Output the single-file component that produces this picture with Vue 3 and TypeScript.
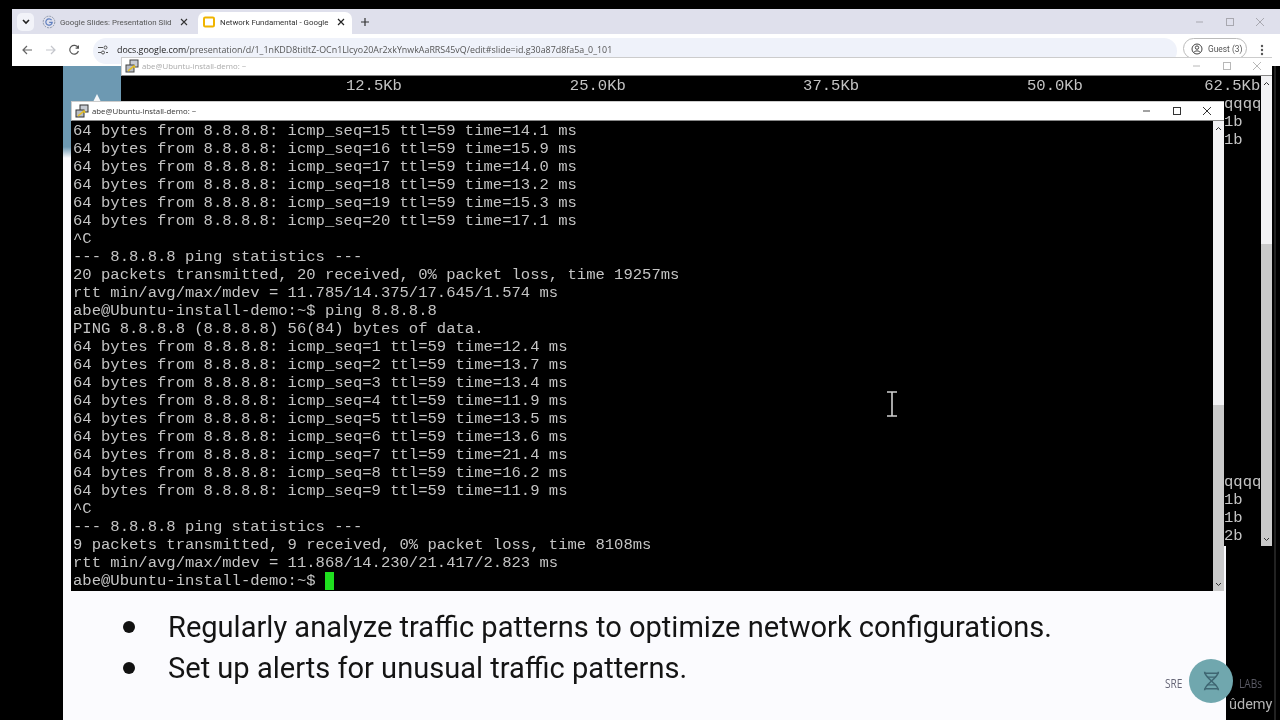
<script setup lang="ts">
const backHeader: string =
  ' '.repeat(24) + '12.5Kb' + ' '.repeat(18) + '25.0Kb' + ' '.repeat(19) + '37.5Kb' + ' '.repeat(18) + '50.0Kb' + ' '.repeat(13) + '62.5Kb'

const backSide: string[] = [
  'qqqq',
  '1b',
  '1b',
  ...Array.from({ length: 18 }, () => ''),
  'qqqq',
  '1b',
  '1b',
  '2b',
]

const frontRows: string[] = [
  '64 bytes from 8.8.8.8: icmp_seq=15 ttl=59 time=14.1 ms',
  '64 bytes from 8.8.8.8: icmp_seq=16 ttl=59 time=15.9 ms',
  '64 bytes from 8.8.8.8: icmp_seq=17 ttl=59 time=14.0 ms',
  '64 bytes from 8.8.8.8: icmp_seq=18 ttl=59 time=13.2 ms',
  '64 bytes from 8.8.8.8: icmp_seq=19 ttl=59 time=15.3 ms',
  '64 bytes from 8.8.8.8: icmp_seq=20 ttl=59 time=17.1 ms',
  '^C',
  '--- 8.8.8.8 ping statistics ---',
  '20 packets transmitted, 20 received, 0% packet loss, time 19257ms',
  'rtt min/avg/max/mdev = 11.785/14.375/17.645/1.574 ms',
  'abe@Ubuntu-install-demo:~$ ping 8.8.8.8',
  'PING 8.8.8.8 (8.8.8.8) 56(84) bytes of data.',
  '64 bytes from 8.8.8.8: icmp_seq=1 ttl=59 time=12.4 ms',
  '64 bytes from 8.8.8.8: icmp_seq=2 ttl=59 time=13.7 ms',
  '64 bytes from 8.8.8.8: icmp_seq=3 ttl=59 time=13.4 ms',
  '64 bytes from 8.8.8.8: icmp_seq=4 ttl=59 time=11.9 ms',
  '64 bytes from 8.8.8.8: icmp_seq=5 ttl=59 time=13.5 ms',
  '64 bytes from 8.8.8.8: icmp_seq=6 ttl=59 time=13.6 ms',
  '64 bytes from 8.8.8.8: icmp_seq=7 ttl=59 time=21.4 ms',
  '64 bytes from 8.8.8.8: icmp_seq=8 ttl=59 time=16.2 ms',
  '64 bytes from 8.8.8.8: icmp_seq=9 ttl=59 time=11.9 ms',
  '^C',
  '--- 8.8.8.8 ping statistics ---',
  '9 packets transmitted, 9 received, 0% packet loss, time 8108ms',
  'rtt min/avg/max/mdev = 11.868/14.230/21.417/2.823 ms',
]
</script>

<template>
  <div class="screen">
    <div class="browser">
      <div class="tabstrip">
        <div class="tab-menu">
          <svg width="8" height="6" viewBox="0 0 8 6"><path d="M1 1l3 3 3-3" fill="none" stroke="#222" stroke-width="1.6" /></svg>
        </div>
        <div class="tab tab-idle">
          <svg class="fav" width="14" height="14" viewBox="0 0 14 14">
            <circle cx="7" cy="7" r="5.8" fill="none" stroke="#8c96a8" stroke-width="1" stroke-dasharray="2 1" />
            <path d="M9.6 5.1A3.2 3.2 0 1 0 10.2 7.4H7.2" fill="none" stroke="#5f7fc0" stroke-width="1.2" />
          </svg>
          <span class="tab-label">Google Slides: Presentation Slid</span>
          <svg class="tab-x" width="8" height="8" viewBox="0 0 8 8"><path d="M1 1l6 6M7 1L1 7" stroke="#333" stroke-width="1.1" /></svg>
        </div>
        <div class="tab tab-active">
          <svg class="fav" width="12" height="12" viewBox="0 0 12 12">
            <rect x="1" y="1.5" width="10" height="9" rx="1.2" fill="#fff" stroke="#f0b400" stroke-width="2" />
          </svg>
          <span class="tab-label">Network Fundamental - Google</span>
          <svg class="tab-x" width="8" height="8" viewBox="0 0 8 8"><path d="M1 1l6 6M7 1L1 7" stroke="#222" stroke-width="1.2" /></svg>
        </div>
        <svg class="new-tab" width="10" height="10" viewBox="0 0 10 10"><path d="M5 1v8M1 5h8" stroke="#333" stroke-width="1.2" /></svg>
        <div class="win-controls chrome-controls">
          <svg width="10" height="10" viewBox="0 0 10 10"><path d="M1 5h7" stroke="#a8a8b0" stroke-width="1" /></svg>
          <svg width="10" height="10" viewBox="0 0 10 10"><rect x="1.5" y="1.5" width="7" height="7" fill="none" stroke="#a8a8b0" /></svg>
          <svg width="10" height="10" viewBox="0 0 10 10"><path d="M1 1l8 8M9 1l-8 8" stroke="#a8a8b0" /></svg>
        </div>
      </div>
      <div class="toolbar">
        <svg class="nav" width="12" height="12" viewBox="0 0 12 12"><path d="M11 6H2M6 2L2 6l4 4" fill="none" stroke="#666" stroke-width="1.2" /></svg>
        <svg class="nav" width="12" height="12" viewBox="0 0 12 12"><path d="M1 6h9M6 2l4 4-4 4" fill="none" stroke="#c4c6cc" stroke-width="1.2" /></svg>
        <svg class="nav" width="12" height="12" viewBox="0 0 12 12"><path d="M10 3.6A4.4 4.4 0 1 0 10.4 7M10.4 1.4v2.8H7.6" fill="none" stroke="#555" stroke-width="1.2" /></svg>
        <div class="omnibox">
          <svg width="12" height="10" viewBox="0 0 12 10">
            <path d="M1 2.5h5M9 7.5h2M1 7.5h3" stroke="#555" stroke-width="1.1" />
            <circle cx="8.5" cy="2.5" r="1.5" fill="none" stroke="#555" />
            <circle cx="6" cy="7.5" r="1.5" fill="none" stroke="#555" />
          </svg>
          <span class="url"><b>docs.google.com</b>/presentation/d/1_1nKDD8titltZ-OCn1Llcyo20Ar2xkYnwkAaRRS45vQ/edit#slide=id.g30a87d8fa5a_0_101</span>
        </div>
        <div class="guest">
          <svg width="12" height="12" viewBox="0 0 12 12">
            <circle cx="6" cy="6" r="5" fill="none" stroke="#444" />
            <circle cx="6" cy="4.6" r="1.7" fill="none" stroke="#444" />
            <path d="M2.8 9.4C4 7.4 8 7.4 9.2 9.4" fill="none" stroke="#444" />
          </svg>
          <span>Guest (3)</span>
        </div>
        <svg class="kebab" width="4" height="12" viewBox="0 0 4 12">
          <circle cx="2" cy="2" r="1.2" fill="#555" /><circle cx="2" cy="6" r="1.2" fill="#555" /><circle cx="2" cy="10" r="1.2" fill="#555" />
        </svg>
      </div>
      <div class="stage">
        <div class="edge-line"></div>
        <div class="slide">
          <div class="slide-bg"><div class="peak"></div></div>
          <div class="slide-text">
            <ul class="points">
              <li>Regularly analyze traffic patterns to optimize network configurations.</li>
              <li>Set up alerts for unusual traffic patterns.</li>
            </ul>
            <div class="logo">
              <span class="logo-word logo-sre">SRE</span>
              <div class="logo-circle">
                <svg width="19" height="20" viewBox="0 0 24 26">
                  <g fill="none" stroke="#3f6672" stroke-width="2">
                    <path d="M3 1C3 9 21 17 21 25" />
                    <path d="M21 1C21 9 3 17 3 25" />
                    <path d="M3 3h18M6 8h12M6 18h12M3 23h18" stroke-width="1.8" />
                  </g>
                </svg>
              </div>
              <span class="logo-word logo-labs">LABs</span>
            </div>
          </div>
        </div>
      </div>
    </div>

    <span class="udemy">ûdemy</span>

    <section class="term term-back">
      <header class="term-title">
        <svg class="putty" width="14" height="14" viewBox="0 0 14 14">
          <rect x="5" y="1" width="8" height="7" fill="#c8ccd4" stroke="#444" />
          <rect x="1" y="6" width="8" height="7" fill="#b8bcc4" stroke="#444" />
          <path d="M3 12l6-5 1 2" fill="none" stroke="#e8c020" stroke-width="1.6" />
        </svg>
        <span>abe@Ubuntu-install-demo: ~</span>
        <div class="win-controls">
          <svg width="10" height="10" viewBox="0 0 10 10"><path d="M1 5h7" stroke="#b8b8b8" /></svg>
          <svg width="10" height="10" viewBox="0 0 10 10"><rect x="1.5" y="1.5" width="7" height="7" fill="none" stroke="#b8b8b8" /></svg>
          <svg width="10" height="10" viewBox="0 0 10 10"><path d="M1 1l8 8M9 1l-8 8" stroke="#b8b8b8" /></svg>
        </div>
      </header>
      <div class="term-body">
        <div class="term-text">
          <div class="row">{{ backHeader }}</div>
          <div v-for="(row, i) in backSide" :key="i" class="row row-side">{{ row }}</div>
        </div>
        <div class="scroll">
          <span class="thumb thumb-back"></span>
          <svg class="arrow up" width="7" height="5" viewBox="0 0 7 5"><path d="M1 4l2.5-2.5L6 4" fill="none" stroke="#333" /></svg>
          <svg class="arrow down" width="7" height="5" viewBox="0 0 7 5"><path d="M1 1l2.5 2.5L6 1" fill="none" stroke="#333" /></svg>
        </div>
      </div>
    </section>

    <section class="term term-front">
      <header class="term-title">
        <svg class="putty" width="14" height="14" viewBox="0 0 14 14">
          <rect x="5" y="1" width="8" height="7" fill="#c8ccd4" stroke="#333" />
          <rect x="1" y="6" width="8" height="7" fill="#b8bcc4" stroke="#333" />
          <path d="M3 12l6-5 1 2" fill="none" stroke="#e8c020" stroke-width="1.6" />
        </svg>
        <span>abe@Ubuntu-install-demo: ~</span>
        <div class="win-controls">
          <svg width="10" height="10" viewBox="0 0 10 10"><path d="M1 5h7" stroke="#444" /></svg>
          <svg width="10" height="10" viewBox="0 0 10 10"><rect x="1.5" y="1.5" width="7" height="7" fill="none" stroke="#333" /></svg>
          <svg width="10" height="10" viewBox="0 0 10 10"><path d="M1 1l8 8M9 1l-8 8" stroke="#333" /></svg>
        </div>
      </header>
      <div class="term-body">
        <div class="term-text">
          <div v-for="(row, i) in frontRows" :key="i" class="row">{{ row }}</div>
          <div class="row">abe@Ubuntu-install-demo:~$ <span class="cursor"></span></div>
        </div>
        <div class="scroll">
          <span class="thumb thumb-front"></span>
          <svg class="arrow up" width="7" height="5" viewBox="0 0 7 5"><path d="M1 4l2.5-2.5L6 4" fill="none" stroke="#333" /></svg>
          <svg class="arrow down" width="7" height="5" viewBox="0 0 7 5"><path d="M1 1l2.5 2.5L6 1" fill="none" stroke="#333" /></svg>
        </div>
      </div>
    </section>

    <svg class="ibeam" width="12" height="26" viewBox="0 0 12 26">
      <path d="M1 1h10M1 25h10M6 1v24" fill="none" stroke="#d0d0d0" stroke-width="1.6" />
    </svg>
  </div>
</template>

<style scoped>
.screen {
  position: relative;
  width: 1280px;
  height: 720px;
  overflow: hidden;
  background: #000;
  font-family: "Open Sans", "Noto Sans", sans-serif;
  filter: blur(0.35px);
}
.browser {
  display: flex;
  flex-direction: column;
  height: 711px;
  margin: 9px 0 0 12px;
}
.tabstrip {
  display: flex;
  align-items: flex-end;
  height: 25px;
  flex: none;
  padding-left: 5px;
  background: #dfe0ec;
}
.tab-menu {
  display: flex;
  align-items: center;
  justify-content: center;
  width: 17px;
  height: 18px;
  margin-bottom: 3px;
  border-radius: 5px;
  background: #f2f3f9;
}
.tab {
  display: flex;
  align-items: center;
  height: 22px;
  box-sizing: border-box;
  font-family: Roboto, "Noto Sans", sans-serif;
  font-size: 7.9px;
  color: #555;
}
.tab-idle {
  width: 164px;
  gap: 4px;
  padding: 0 10px 2px 8px;
}
.tab-active {
  width: 154px;
  gap: 5px;
  padding: 0 7px 2px 5px;
  background: #fff;
  border-radius: 7px 7px 0 0;
  color: #333;
}
.fav { flex: none; }
.tab-label {
  flex: 1;
  min-width: 0;
  white-space: nowrap;
}
.tab-x { flex: none; margin-left: 3px; }
.new-tab { margin: 0 0 7px 8px; }
.win-controls {
  display: flex;
  align-items: center;
  gap: 20px;
  margin-left: auto;
}
.chrome-controls {
  align-self: center;
  padding-right: 15px;
}
.toolbar {
  display: flex;
  align-items: flex-start;
  height: 32px;
  flex: none;
  padding-left: 9px;
  background: #fff;
}
.nav { margin: 10px 11.5px 0 0; flex: none; }
.omnibox {
  display: flex;
  align-items: flex-start;
  gap: 8px;
  width: 1084px;
  height: 26px;
  margin: 4px 0 0 1.5px;
  padding: 5px 0 0 4px;
  box-sizing: border-box;
  border-radius: 13px;
  background: #eff2fa;
  font-size: 8.9px;
  color: #555;
  white-space: nowrap;
}
.omnibox svg { margin-top: 2px; flex: none; }
.url { line-height: 13px; }
.url b { font-weight: 400; color: #222; }
.guest {
  display: flex;
  align-items: center;
  gap: 5px;
  width: 64px;
  height: 21px;
  box-sizing: border-box;
  margin: 4px 0 0 6px;
  padding-left: 7px;
  border: 1px solid #bbb;
  border-radius: 11px;
  font-family: Roboto, "Noto Sans", sans-serif;
  font-size: 8.4px;
  color: #555;
}
.kebab { margin: 10px 0 0 13px; }
.stage {
  position: relative;
  flex: 1;
  background: #000;
}
.edge-line {
  position: absolute;
  top: 0;
  bottom: 0;
  left: 1262px;
  width: 2px;
  background: #222;
}
.slide {
  display: flex;
  flex-direction: column;
  justify-content: space-between;
  width: 1163px;
  height: 100%;
  margin-left: 51px;
  background: #fbfbfe;
}
.slide-bg {
  position: relative;
  height: 92px;
  background: linear-gradient(to bottom, #6d99b2 0, #6d99b2 88%, #fbfbfe 100%);
}
.peak {
  position: absolute;
  left: 30px;
  top: 28px;
  width: 8px;
  height: 8px;
  background: #f4f6f8;
  clip-path: polygon(50% 0, 100% 100%, 0 100%);
}
.slide-text {
  position: relative;
  height: 129px;
}
.points {
  margin: 0;
  padding: 16px 0 0 105px;
  font-family: Roboto, "Noto Sans", sans-serif;
  font-size: 29.05px;
  line-height: 41px;
  color: #141414;
  list-style: none;
}
.points li {
  position: relative;
  white-space: nowrap;
}
.points li::before {
  content: "";
  position: absolute;
  left: -45px;
  top: 14px;
  width: 12px;
  height: 12px;
  border-radius: 50%;
  background: #111;
}
.logo {
  position: absolute;
  left: 1102px;
  top: 68px;
  display: flex;
  align-items: center;
  gap: 6px;
  font-size: 13px;
}
.logo-word {
  padding-top: 3px;
  transform: scaleX(.78);
  transform-origin: left;
}
.logo-sre { width: 18px; color: #667; }
.logo-labs { color: #5a5a64; }
.logo-circle {
  display: flex;
  align-items: center;
  justify-content: center;
  width: 44px;
  height: 44px;
  border-radius: 50%;
  background: #70a7ae;
}
.udemy {
  position: absolute;
  left: 1229px;
  top: 695px;
  font-family: Roboto, "Noto Sans", sans-serif;
  font-size: 14.5px;
  line-height: 20px;
  color: #b4b4b4;
}
.term {
  position: absolute;
  display: flex;
  flex-direction: column;
  background: #000;
}
.term-back {
  left: 121px;
  top: 57px;
  width: 1151px;
  height: 489px;
}
.term-front {
  left: 71px;
  top: 101px;
  width: 1153px;
  height: 490px;
}
.term-title {
  display: flex;
  align-items: center;
  flex: none;
  height: 20px;
  gap: 3px;
  box-sizing: border-box;
  padding: 0 12px 0 3px;
  background: #fff;
  font-size: 7.8px;
  color: #333;
  border-top: 1px solid #ccc;
  border-left: 1px solid #ccc;
  border-bottom: 1px solid #888;
}
.term-back .term-title {
  color: #aaa;
  padding-right: 10px;
  padding-bottom: 2px;
  height: 19px;
}
.term-body {
  flex: 1;
  display: flex;
  min-height: 0;
}
.term-text {
  flex: 1;
  min-width: 0;
  padding: 1px 0 0 2px;
  font-family: "Liberation Mono", monospace;
  font-size: 15.55px;
  line-height: 18px;
  color: #c4c4c4;
}
.term-back .term-text { padding-left: 1px; }
.row {
  height: 18px;
  white-space: pre;
}
.row-side { margin-left: 1102px; }
.cursor {
  display: inline-block;
  width: 9px;
  height: 18px;
  background: #1fe01f;
  vertical-align: top;
}
.scroll {
  position: relative;
  flex: none;
  width: 11px;
  background: #cacaca;
}
.thumb {
  position: absolute;
  left: 0;
  right: 0;
  top: 0;
  background: #f2f2f4;
}
.thumb-back { height: 168px; }
.thumb-front { height: 284px; }
.arrow {
  position: absolute;
  left: 2px;
}
.arrow.up { top: 5px; }
.arrow.down { bottom: 4px; }
.ibeam {
  position: absolute;
  left: 886px;
  top: 391px;
}
</style>

<style>
html, body { background: #000; }
</style>
